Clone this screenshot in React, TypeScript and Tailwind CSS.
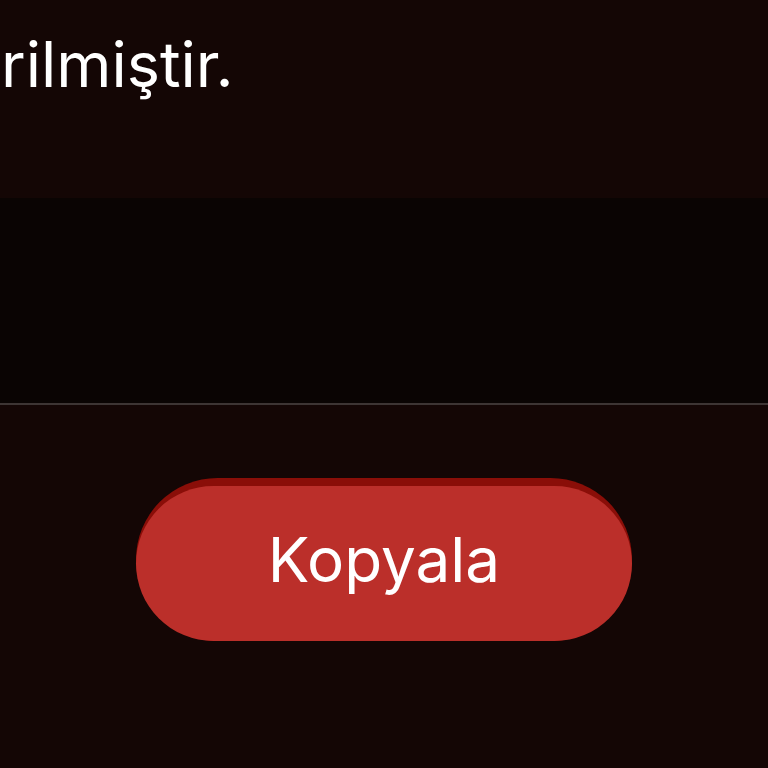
export default function App() {
  return (
    <div className="w-[768px] h-[768px] overflow-hidden bg-[#140605] flex flex-col" style={{ fontFamily: "Inter, 'Noto Sans', sans-serif" }}>
      <div className="h-[198px] shrink-0 bg-[#140605] flex items-start">
        <p className="text-white text-[63px] leading-none mt-[33px] ml-[1px] whitespace-nowrap">rilmiştir.</p>
      </div>
      <div className="h-[205px] shrink-0 bg-[#0a0403]" />
      <div className="h-[2px] shrink-0 bg-[#3d3534]" />
      <div className="flex-1 flex justify-center pt-[73px]">
        <button className="w-[496px] h-[163px] rounded-full bg-[#8a0e08] pt-[8px] flex">
          <span className="w-full h-full rounded-full bg-[#bb2f2a] flex items-center justify-center text-white text-[62px] leading-none pb-[8px]">
            Kopyala
          </span>
        </button>
      </div>
    </div>
  );
}
